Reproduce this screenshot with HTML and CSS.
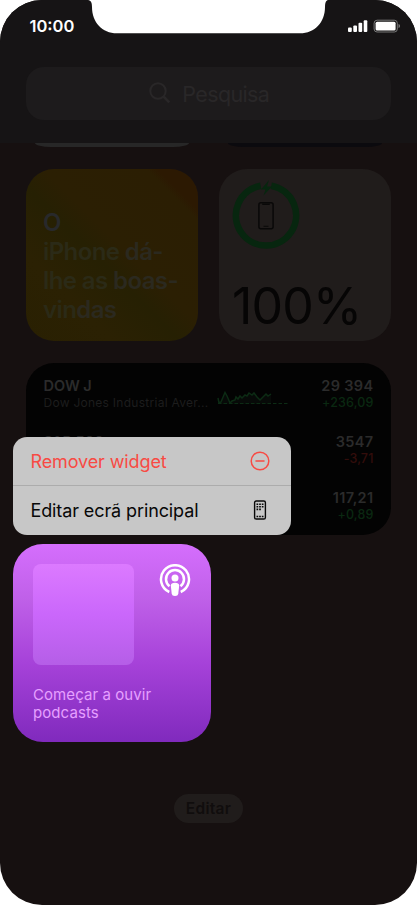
FILE: index.html
```html
<!DOCTYPE html>
<html lang="pt">
<head>
<meta charset="utf-8">
<title>Widgets</title>
<link rel="stylesheet" href="styles.css">
</head>
<body>
<main class="phone">
  <header class="top">
    <svg class="notch" viewBox="0 0 240 34" width="240" height="34"><path d="M0 0C3 .5 4 2.500 4 7C4 22 14 33.300 29 33.300H212C227 33.300 237 22 237 7C237 2.500 238 .5 240 0Z" fill="#fff"/></svg>
    <div class="status">
      <span class="time">10:00</span>
      <svg class="signals" viewBox="0 0 54 14" width="54" height="14">
        <g fill="#fff"><rect x="0" y="8.500" width="3.800" height="4.500" rx="1"/><rect x="5.300" y="6.500" width="3.700" height="6.500" rx="1"/><rect x="10.500" y="3.700" width="3.700" height="9.300" rx="1"/><rect x="15.700" y="1.200" width="3.600" height="11.800" rx="1"/><rect x="27.600" y="2.800" width="20" height="8.600" rx="1.500"/></g>
        <rect x="26.100" y="1.200" width="23.200" height="11.800" rx="3" fill="none" stroke="#777"/>
        <path d="M50.500 5C52.500 5.500 52.500 8.500 50.500 9Z" fill="#777"/>
      </svg>
    </div>
    <div class="search">
      <svg viewBox="0 0 22 22" width="22" height="22" fill="none" stroke="#292728" stroke-width="2"><circle cx="9" cy="9" r="7.700"/><path d="M14.500 14.500L20.300 20.300" stroke-width="2.500"/></svg>
      <span>Pesquisa</span>
    </div>
  </header>
  <section class="widgets">
    <div class="peek peek-light"></div>
    <div class="peek peek-blue"></div>
    <article class="widget tips"><p><b>O</b><br>iPhone <i>dá-</i><br>lhe as <i>boas-</i><br>vin<i>das</i></p></article>
    <article class="widget battery">
      <svg viewBox="0 0 70 72" width="70" height="72">
        <path d="M39.300 4.800A30.100 30.100 0 1 1 28.700 4.800" fill="none" stroke="#07260f" stroke-width="6.600"/>
        <path d="M37 -1L29 8.500H33.500L31.500 14.500L40 5.500H35Z" fill="#07260f"/>
        <rect x="26.900" y="21.800" width="14.200" height="26" rx="2" fill="none" stroke="#090808" stroke-width="1.500"/>
        <path d="M30 22.500H38V23.300Q37.800 24 37 24H31Q30 24 30 23ZM31.500 44.800H36.500V45.800H31.500Z" fill="#090808"/>
      </svg>
      <strong>100%</strong>
    </article>
    <article class="widget stocks">
      <div class="row">
        <div class="name"><b>DOW J</b><span>Dow Jones Industrial Aver...</span></div>
        <svg class="chart" viewBox="0 0 72 16" width="72" height="16" fill="none" stroke="#0c2b14">
          <path d="M1 7L2 12L4 11L8 1.500L10 5L13 12L15 10L18 9L19 6L21 8L23 5L25 7L28 4L30 5L32 2L35 4L37 2L40 6L43 9L47 5L49 3L51 5L54 3V13H1Z" fill="#070a08" stroke="none"/>
          <path d="M1 7L2 12L4 11L8 1.500L10 5L13 12L15 10L18 9L19 6L21 8L23 5L25 7L28 4L30 5L32 2L35 4L37 2L40 6L43 9L47 5L49 3L51 5L54 3" stroke-width="1.500"/>
          <path d="M1 12.500H72" stroke-dasharray="3.500 2"/>
        </svg>
        <div class="price"><b>29 394</b><span class="up">+236,09</span></div>
      </div>
      <div class="row">
        <div class="name"><b>S&amp;P 500</b></div>
        <div class="price"><b>3547</b><span class="down">-3,71</span></div>
      </div>
      <div class="row">
        <div class="price"><b>117,21</b><span class="up">+0,89</span></div>
      </div>
    </article>
  </section>
  <button class="edit"><span>Editar</span></button>

  <nav class="menu">
    <div class="item remove"><span>Remover widget</span>
      <svg viewBox="0 0 20 20" width="20" height="20" fill="none" stroke="#f84a43" stroke-width="1.500"><circle cx="10" cy="10" r="8.800"/><path d="M6 10H14" stroke-linecap="round"/></svg>
    </div>
    <div class="item"><span>Editar ecrã principal</span>
      <svg viewBox="0 0 20 20" width="20" height="20"><rect x="4.600" y="1" width="10.800" height="18" rx="1.600" fill="none" stroke="#080808" stroke-width="1.400"/><path d="M6.500 4.200H13.500M6.500 6.800H13.500M6.500 9.400H11M6.500 16.500H13.500" fill="none" stroke="#080808" stroke-width="1.600" stroke-dasharray="1.700 .95"/></svg>
    </div>
  </nav>
  <article class="podcast">
    <div class="podcast-top">
      <div class="cover"></div>
      <svg viewBox="0 0 32 34" width="32" height="34" fill="none" stroke="#fff" stroke-width="2.500">
        <path d="M10.300 28A14 14 0 1 1 21.700 28"/>
        <path d="M10.500 22.200A9 9 0 1 1 21.500 22.200"/>
        <circle cx="16" cy="14" r="3.500" fill="#fff" stroke="none"/>
        <path d="M11.800 21.500Q12 18.800 16 18.800T20.200 21.500L19.300 29.500Q18.900 32 16 32T12.700 29.500Z" fill="#fff" stroke="none"/>
      </svg>
    </div>
    <p>Começar a ouvir<br>podcasts</p>
  </article>
</main>
</body>
</html>
```

FILE: styles.css
```css
* { box-sizing: border-box; }
body { margin: 0; background: #fff; font-family: Inter, sans-serif; }
p { margin: 0; }
.phone { position: relative; width: 417px; height: 905px; overflow: hidden; background: #161010; border-radius: 42px; white-space: nowrap; }
.top { height: 143px; padding: 0 26px; background: #161415; }
.notch { position: absolute; left: 88px; top: 0; }
.status { height: 67px; padding: 16px 0 0 3.500px; margin-right: -10.500px; display: flex; justify-content: space-between; align-items: flex-start; }
.time { font-size: 16.5px; line-height: 20px; font-weight: 600; color: #fff; }
.signals { margin-top: 2.500px; }
.search { height: 53px; margin: 0 0 0 -.5px; padding-left: 1.500px; border-radius: 18px; background: #1d1b1c; color: #292728; display: flex; align-items: center; justify-content: center; gap: 11.500px; font-size: 21.5px; letter-spacing: -.65px; }
.search svg { margin-top: -2px; }
.widgets { padding: 0 26px 0 25.500px; display: grid; grid-template-columns: 172px 172px; justify-content: space-between; }
.peek { height: 4px; margin: 0 9px 22px; border-radius: 0 0 16px 16px / 0 0 4px 4px; }
.peek-light { background: #272727; }
.peek-blue { background: #0b0a0e; }
.widget { height: 172px; border-radius: 28px; }
.tips { padding: 39px 0 0 17.500px; background: linear-gradient(45deg, #292002 0%, #2b2103 25%, #262003 45%, #2b1f03 55%, #2b1e03 85%, #2c1902 88%, #2c1902 100%); color: #2b2a17; font-size: 24px; line-height: 29px; font-weight: 600; letter-spacing: -.6px; }
.tips b { color: #28292b; font-weight: 600; }
.tips i { font-style: normal; color: #2b291f; }
.battery { padding: 12px 0 0 13px; background: #201c1b; display: flex; flex-direction: column; }
.battery svg { overflow: visible; }
.battery strong { font-size: 50px; font-weight: 400; line-height: 60px; margin-top: 23px; color: #060505; letter-spacing: -.8px; }
.stocks { grid-column: 1 / 3; margin-top: 22px; padding: 14px 17.500px 14px 18px; background: #030303; }
.row { height: 56px; display: flex; justify-content: flex-end; }
.name { margin-right: auto; }
.name b, .price b { display: block; font-size: 14.500px; line-height: 18px; font-weight: 600; color: #2b2b2b; }
.name span { display: block; width: 168px; font-size: 12px; line-height: 15px; color: #1d1d1d; letter-spacing: .27px; }
.price { width: 54px; text-align: right; }
.price b { letter-spacing: .35px; }
.price span { display: block; margin-top: -.5px; font-size: 12.500px; line-height: 15px; font-weight: 500; letter-spacing: .15px; }
.price .up { color: #0a2811; }
.price .down { color: #330d0b; }
.chart { margin: 14px 31px 0 0; }
.edit { display: block; width: 69px; height: 29px; margin: 259px auto 0; padding: 0; border: 0; border-radius: 15px; background: #201c1b; color: #100d0d; font: 600 15.500px/29px Inter, sans-serif; letter-spacing: .3px; }
.menu { position: absolute; left: 12.500px; top: 437px; width: 278px; height: 97.500px; border-radius: 14px; background: #c7c7c7; color: #080808; }
.item { height: 49px; padding: 0 21px 0 18px; display: flex; align-items: center; justify-content: space-between; font-size: 18px; letter-spacing: -.11px; }
.item + .item { height: 48.500px; }
.remove { border-bottom: 1px solid #acacac; color: #f84a43; }
.podcast { position: absolute; left: 12.500px; top: 543.500px; width: 198.500px; height: 198.500px; padding: 20.500px; border-radius: 30px; background: linear-gradient(#d56efd 0%, #bf60e8 28%, #a642d9 60%, #802abd 100%); color: #e6a0ff; }
.podcast-top { display: flex; justify-content: space-between; }
.cover { width: 101px; height: 101px; border-radius: 8px; background: linear-gradient(#dc7aff, #ca67fb 50%, #b55ee7); }
.podcast p { margin-top: 21px; font-size: 15px; line-height: 18px; letter-spacing: .08px; }
```
